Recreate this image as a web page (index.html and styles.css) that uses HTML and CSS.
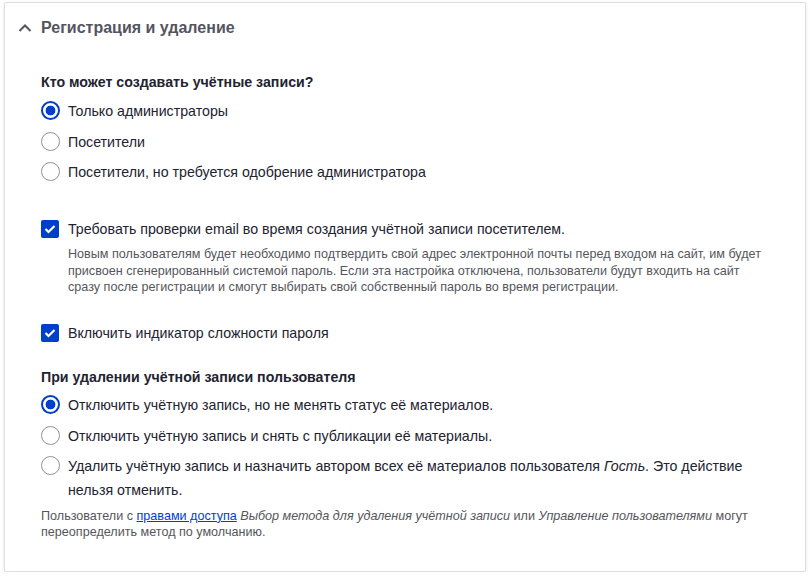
FILE: index.html
```html
<!DOCTYPE html>
<html lang="ru">
<head>
<meta charset="utf-8">
<title>Регистрация и удаление</title>
<link rel="stylesheet" href="styles.css">
</head>
<body>
<section class="card">
  <div class="summary">
    <svg class="chev" width="14" height="10" viewBox="0 0 14 10"><path d="M1.5 8 L7 2.5 L12.5 8" fill="none" stroke="#545560" stroke-width="2"/></svg>
    <span>Регистрация и удаление</span>
  </div>
  <div class="content">
    <div class="group">
      <div class="legend">Кто может создавать учётные записи?</div>
      <label class="radio-row"><span class="radio checked"></span><span class="lbl">Только администраторы</span></label>
      <label class="radio-row"><span class="radio"></span><span class="lbl">Посетители</span></label>
      <label class="radio-row"><span class="radio"></span><span class="lbl">Посетители, но требуется одобрение администратора</span></label>
    </div>
    <div class="check-item first">
      <label class="check-row"><span class="checkbox"><svg width="12" height="10" viewBox="0 0 12 10"><path d="M1.5 5 L4.5 8 L10.5 2" fill="none" stroke="#fff" stroke-width="2.2"/></svg></span><span class="lbl">Требовать проверки email во время создания учётной записи посетителем.</span></label>
      <div class="desc indent">Новым пользователям будет необходимо подтвердить свой адрес электронной почты перед входом на сайт, им будет присвоен сгенерированный системой пароль. Если эта настройка отключена, пользователи будут входить на сайт сразу после регистрации и смогут выбирать свой собственный пароль во время регистрации.</div>
    </div>
    <div class="check-item second">
      <label class="check-row"><span class="checkbox"><svg width="12" height="10" viewBox="0 0 12 10"><path d="M1.5 5 L4.5 8 L10.5 2" fill="none" stroke="#fff" stroke-width="2.2"/></svg></span><span class="lbl">Включить индикатор сложности пароля</span></label>
    </div>
    <div class="group second-group">
      <div class="legend">При удалении учётной записи пользователя</div>
      <label class="radio-row"><span class="radio checked"></span><span class="lbl">Отключить учётную запись, но не менять статус её материалов.</span></label>
      <label class="radio-row"><span class="radio"></span><span class="lbl">Отключить учётную запись и снять с публикации её материалы.</span></label>
      <label class="radio-row"><span class="radio"></span><span class="lbl">Удалить учётную запись и назначить автором всех её материалов пользователя <em>Гость</em>. Это действие нельзя отменить.</span></label>
      <div class="desc bottom">Пользователи с <a href="#">правами доступа</a> <em>Выбор метода для удаления учётной записи</em> или <em>Управление пользователями</em> могут переопределить метод по умолчанию.</div>
    </div>
  </div>
</section>
</body>
</html>
```
FILE: styles.css
```css
* { box-sizing: border-box; }
html, body { margin: 0; padding: 0; background: #fff; }
body {
  padding: 2px 4px 0 4px;
  font-family: "Liberation Sans", Arial, sans-serif;
  color: #222330;
}
.card {
  width: 802px;
  height: 570px;
  border: 1px solid #dedfe4;
  border-radius: 2px;
  box-shadow: 0 1px 3px rgba(0,0,0,0.12);
  background: #fff;
}
.summary {
  display: flex;
  align-items: center;
  height: 49px;
  padding-left: 13px;
  font-size: 16px;
  font-weight: bold;
  color: #545560;
}
.chev { margin-right: 9px; margin-top: 1px; }
.content { padding: 20px 36px 0 36px; }
.legend {
  font-size: 14.2px;
  font-weight: bold;
  line-height: 20px;
  margin-bottom: 7px;
}
.radio-row, .check-row {
  display: flex;
  align-items: flex-start;
  font-size: 14.2px;
  line-height: 24px;
}
.radio-row { margin-bottom: 6.5px; }
.radio {
  flex: none;
  width: 19px;
  height: 19px;
  border: 1px solid #8e929c;
  border-radius: 50%;
  margin: 2px 8px 0 0;
  background: #fff;
}
.radio.checked {
  border: 2px solid #003ecc;
  background: radial-gradient(circle, #003ecc 0 4.6px, #fff 5.2px);
}
.checkbox {
  flex: none;
  width: 18px;
  height: 18px;
  border-radius: 2px;
  background: #003ecc;
  margin: 3px 9px 0 0;
  display: flex;
  align-items: center;
  justify-content: center;
}
.check-item.first { margin-top: 33px; }
.check-item.second { margin-top: 25px; }
.desc {
  font-size: 12.6px;
  line-height: 16.6px;
  color: #55565b;
}
.desc.indent { margin: 5px 0 0 27px; max-width: 700px; }
.second-group { margin-top: 22.5px; }
.second-group .legend { margin-bottom: 6px; }
.desc.bottom { margin-top: -1px; max-width: 720px; }
.desc a { color: #003ecc; }
em { font-style: italic; }
```
